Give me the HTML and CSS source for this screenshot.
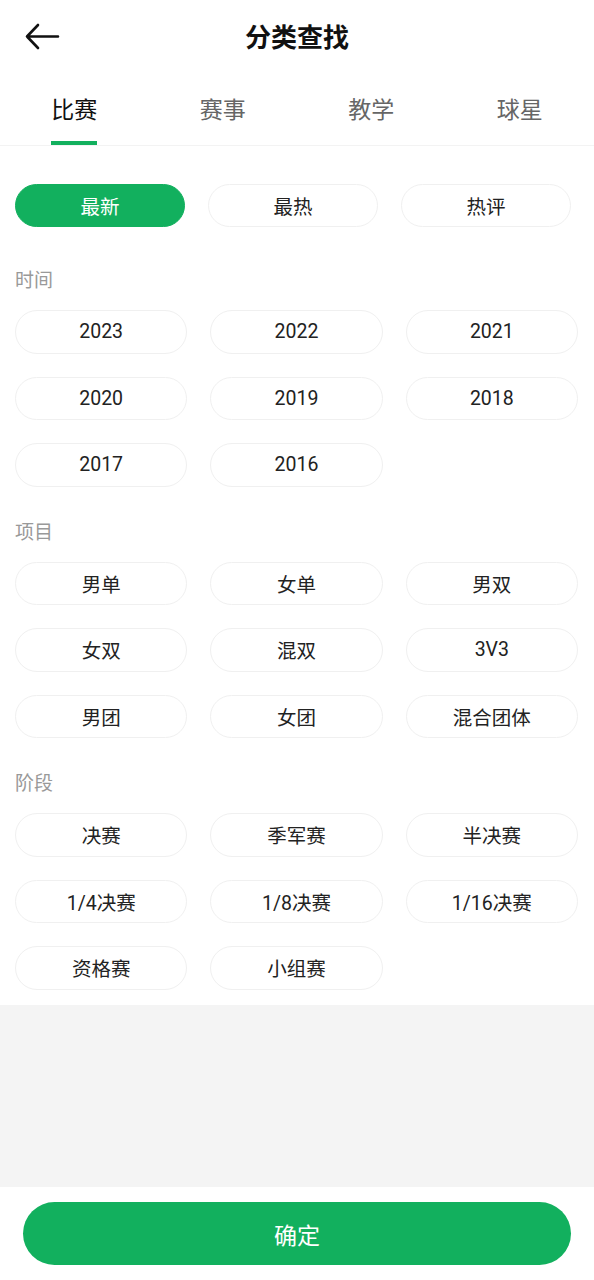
FILE: index.html
```html
<!DOCTYPE html>
<html lang="zh-CN">
<head>
<meta charset="utf-8">
<link rel="stylesheet" href="styles.css">
</head>
<body>
<div class="page">
  <header class="header">
    <button class="back" aria-label="返回">
      <svg width="36" height="28" viewBox="0 0 36 28"><path d="M14 2 L3 13.5 L14 25 M3 13.5 H34" fill="none" stroke="#111" stroke-width="2.6" stroke-linecap="round" stroke-linejoin="round"/></svg>
    </button>
    <h1 class="title">分类查找</h1>
  </header>
  <nav class="tabs">
    <div class="tab active"><span>比赛</span></div>
    <div class="tab"><span>赛事</span></div>
    <div class="tab"><span>教学</span></div>
    <div class="tab"><span>球星</span></div>
  </nav>
  <main class="content">
    <div class="sort-row">
      <div class="chip sort selected">最新</div>
      <div class="chip sort">最热</div>
      <div class="chip sort">热评</div>
    </div>
    <section class="section">
      <div class="label">时间</div>
      <div class="grid">
        <div class="chip">2023</div><div class="chip">2022</div><div class="chip">2021</div>
        <div class="chip">2020</div><div class="chip">2019</div><div class="chip">2018</div>
        <div class="chip">2017</div><div class="chip">2016</div>
      </div>
    </section>
    <section class="section">
      <div class="label">项目</div>
      <div class="grid">
        <div class="chip">男单</div><div class="chip">女单</div><div class="chip">男双</div>
        <div class="chip">女双</div><div class="chip">混双</div><div class="chip">3V3</div>
        <div class="chip">男团</div><div class="chip">女团</div><div class="chip">混合团体</div>
      </div>
    </section>
    <section class="section">
      <div class="label">阶段</div>
      <div class="grid">
        <div class="chip">决赛</div><div class="chip">季军赛</div><div class="chip">半决赛</div>
        <div class="chip">1/4决赛</div><div class="chip">1/8决赛</div><div class="chip">1/16决赛</div>
        <div class="chip">资格赛</div><div class="chip">小组赛</div>
      </div>
    </section>
  </main>
  <div class="spacer"></div>
  <footer class="footer">
    <button class="confirm">确定</button>
  </footer>
</div>
</body>
</html>
```
FILE: styles.css
```css
* { box-sizing: border-box; }
html, body { margin: 0; padding: 0; }
body {
  font-family: Roboto, "Noto Sans CJK SC", sans-serif;
  color: #222;
  background: #fff;
}
.page {
  width: 594px;
  height: 1280px;
  display: flex;
  flex-direction: column;
}
.header {
  height: 76px;
  display: flex;
  align-items: center;
  justify-content: center;
  position: relative;
}
.back {
  position: absolute;
  left: 24px;
  top: 23px;
  padding: 0;
  border: 0;
  background: none;
  display: flex;
}
.title {
  margin: 0;
  font-size: 26px;
  font-weight: 700;
  color: #111;
  line-height: 1;
}
.tabs {
  display: flex;
  height: 70px;
  border-bottom: 1px solid #f3f3f3;
}
.tab {
  flex: 1;
  display: flex;
  justify-content: center;
  align-items: flex-start;
  padding-top: 21px;
}
.tab span {
  font-size: 23px;
  line-height: 28px;
  color: #666;
  height: 48px;
  display: block;
}
.tab.active span {
  color: #111;
  border-bottom: 4px solid #12b05e;
}
.content {
  background: #fff;
  padding: 38px 16px 15px 15px;
}
.sort-row {
  display: grid;
  grid-template-columns: repeat(3, 170px);
  column-gap: 23px;
  margin-bottom: 40px;
}
.chip {
  height: 43.5px;
  border: 1px solid #f0f0f0;
  border-radius: 22px;
  display: flex;
  align-items: center;
  justify-content: center;
  font-size: 19.5px;
  color: #222;
  background: #fff;
}
.chip.sort { height: 43px; }
.chip.selected {
  background: #12b05e;
  border-color: #12b05e;
  color: #fff;
}
.section + .section { margin-top: 32px; }
.label {
  font-size: 19px;
  line-height: 28px;
  color: #999;
  margin-bottom: 15px;
}
.grid {
  display: grid;
  grid-template-columns: repeat(3, 1fr);
  column-gap: 23px;
  row-gap: 23px;
}
.spacer {
  flex: 1;
  background: #f4f4f4;
}
.footer {
  height: 93px;
  background: #fff;
  padding: 15px 23px 0 23px;
}
.confirm {
  width: 100%;
  height: 63px;
  border: 0;
  border-radius: 32px;
  background: #12b05e;
  color: #fff;
  font-family: Roboto, "Noto Sans CJK SC", sans-serif;
  font-size: 23px;
}
```
